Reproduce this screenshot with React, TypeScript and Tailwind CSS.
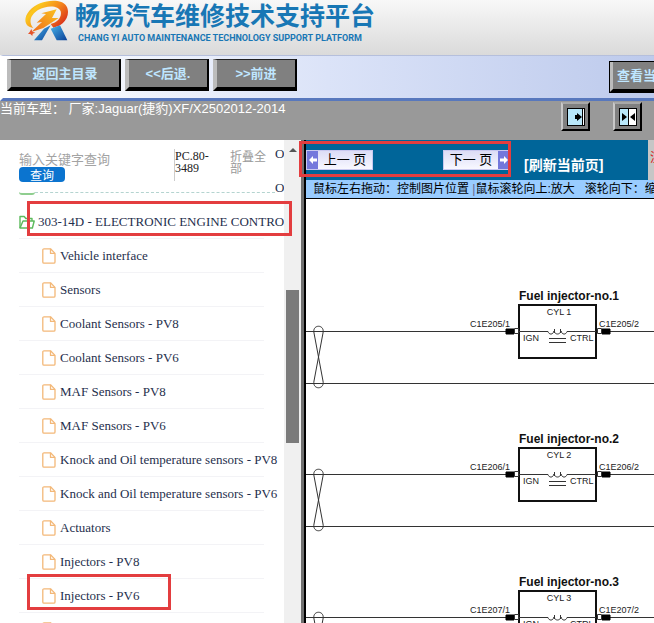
import React from "react";

const items = [
  "Vehicle interface",
  "Sensors",
  "Coolant Sensors - PV8",
  "Coolant Sensors - PV6",
  "MAF Sensors - PV8",
  "MAF Sensors - PV6",
  "Knock and Oil temperature sensors - PV8",
  "Knock and Oil temperature sensors - PV6",
  "Actuators",
  "Injectors - PV8",
  "Injectors - PV6",
];

const injectors = [
  { no: 1, code: "C1E205" },
  { no: 2, code: "C1E206" },
  { no: 3, code: "C1E207" },
];

function Logo() {
  return (
    <svg className="h-[42px] w-[48px] shrink-0" viewBox="0 0 144 126" aria-hidden="true">
      <defs>
        <linearGradient id="flame" x1="0" y1="0" x2="1" y2="0.6">
          <stop offset="0" stopColor="#ee7a1c" />
          <stop offset="0.3" stopColor="#fbc81e" />
          <stop offset="0.65" stopColor="#f58a1c" />
          <stop offset="1" stopColor="#dc3a1c" />
        </linearGradient>
        <linearGradient id="bolt" x1="0" y1="1" x2="1" y2="0">
          <stop offset="0" stopColor="#ee6a1c" />
          <stop offset="1" stopColor="#fbc31e" />
        </linearGradient>
        <linearGradient id="leg" x1="0" y1="0" x2="1" y2="1">
          <stop offset="0" stopColor="#49b4ea" />
          <stop offset="1" stopColor="#0a3f96" />
        </linearGradient>
      </defs>
      <path d="M28 84C2 82 -4 56 16 32C38 6 84 -4 112 6C138 16 138 50 116 70C108 77 100 80 88 83L80 72C102 66 114 50 110 34C104 16 70 14 42 30C20 44 12 66 28 84Z" fill="url(#flame)" />
      <path d="M52 40L98 28L84 54L104 54L58 84L22 96L54 66L38 68L66 42Z" fill="url(#bolt)" />
      <path d="M60 86L80 76L66 100L54 121L30 121Z" fill="url(#leg)" />
      <path d="M80 86L108 76L130 121L98 121Z" fill="url(#leg)" />
      <path d="M22 87L25 95L34 98L26 101L25 108L19 102L12 102L17 96Z" fill="#e5532a" />
    </svg>
  );
}

function FileIcon() {
  return (
    <svg className="h-4 w-[14px] shrink-0" viewBox="0 0 14 16" fill="none" stroke="#f3b878" strokeWidth="1.3" strokeLinejoin="round" aria-hidden="true">
      <path d="M2 .8h6.5L13 5.4V14a1.2 1.2 0 0 1-1.2 1.2H2A1.2 1.2 0 0 1 .8 14V2A1.2 1.2 0 0 1 2 .8Z" />
      <path d="M8.5.8v4.6H13" />
    </svg>
  );
}

function FolderIcon() {
  return (
    <svg className="h-[14px] w-4 shrink-0" viewBox="0 0 16 14" fill="none" stroke="#5cba5c" strokeWidth="1.4" strokeLinejoin="round" aria-hidden="true">
      <path d="M1 13V1.5h4.2l1.6 2H13V6" />
      <path d="M1 13 4 6h11.2l-1.8 7Z" />
    </svg>
  );
}

function ToolButton({ children, className = "" }: { children: React.ReactNode; className?: string }) {
  return (
    <button
      type="button"
      className={`h-8 shrink-0 overflow-hidden whitespace-nowrap border-t border-r-2 border-b-4 border-l-4 border-t-[#222] border-r-black border-b-black border-l-[#bcbcbc] bg-[#808080] text-[13px] leading-4 font-bold text-[#bfe6ff] ${className}`}
    >
      {children}
    </button>
  );
}

function IconButton({ label, split = false }: { label: string; split?: boolean }) {
  return (
    <button
      type="button"
      aria-label={label}
      className="flex h-[29px] w-[29px] shrink-0 items-center justify-center border-2 border-t-[#a8a8a8] border-r-black border-b-black border-l-[#c8c8c8] bg-[#808080]"
    >
      <svg className="h-[18px] w-[18px]" viewBox="0 0 18 18" aria-hidden="true">
        <rect x=".5" y=".5" width="17" height="17" fill="#fff" stroke="#000" />
        <rect x="1" y="1" width={split ? 8 : 14} height="16" fill="#b9e8fb" />
        <path d={split ? "M9.5 0v18" : "M15.5 0v18"} stroke="#000" />
        {split ? (
          <path d="M3 5v8l5-4ZM16 5v8l-5-4Z" />
        ) : (
          <path d="M8 7h2V5l5 4-5 4v-2H8Z" />
        )}
      </svg>
    </button>
  );
}

function PageArrow({ back = false }: { back?: boolean }) {
  return (
    <span className="flex h-full w-[11px] shrink-0 items-center justify-center bg-[#7478dc]">
      <svg className="h-2 w-2" viewBox="0 0 8 8" fill="#fff" aria-hidden="true">
        <path d={back ? "M0 4 4 0v2.500h4v3H4V8Z" : "M8 4 4 0v2.500H0v3h4V8Z"} />
      </svg>
    </span>
  );
}

function Wiring() {
  return (
    <svg className="block h-full w-full font-['Liberation_Sans',sans-serif]" role="img" aria-label="Fuel injector wiring">
      <g transform="translate(-306 -199)">
        {injectors.map(({ no, code }, i) => (
          <g key={no} transform={`translate(0 ${i * 143})`} fill="none" stroke="#333">
            <path d="M306 331.500H508M610 331.500H3000M306 383.500H3000" />
            <path d="M314 333C312 324 325 324 323 333L314 381C312 390 325 390 323 381Z" />
            <rect x="519" y="305" width="77" height="53" stroke="#111" strokeWidth="2" />
            <path d="M519 331.500H548C549 335 553 335 554 331C555 335 560 335 561 331C562 335 566 335 567 331.500H596M554.500 329v4M560.500 329v4" />
            <path d="M549 338.500h17M549 342.500h17" />
            <path d="M506 329h8v5h-8ZM602 329h8v5h-8Z" fill="#000" stroke="#000" />
            <path d="M514.500 328.500h4v5h-4ZM597.500 328.500h4v5h-4Z" fill="#fff" />
            <g fill="#222" stroke="none" fontSize="9">
              <text x="519" y="300" fontSize="12" fontWeight="700" fill="#111">Fuel injector-no.{no}</text>
              <text x="559" y="315" textAnchor="middle">CYL {no}</text>
              <text x="510" y="327" textAnchor="end">{code}/1</text>
              <text x="599" y="327">{code}/2</text>
              <text x="523" y="341">IGN</text>
              <text x="570" y="341">CTRL</text>
            </g>
          </g>
        ))}
      </g>
    </svg>
  );
}

export default function App() {
  return (
    <div className="relative flex h-screen flex-col overflow-hidden bg-white font-['Liberation_Sans','Noto_Sans_CJK_SC',sans-serif]">
      <header className="flex h-[55px] shrink-0 items-start bg-linear-to-b from-[#f8f8f8] to-[#dadada] pl-6">
        <Logo />
        <div className="pl-[3px] whitespace-nowrap text-[#1877b5]">
          <h1 className="pt-[2px] text-[25px] leading-7 font-bold">畅易汽车维修技术支持平台</h1>
          <p className="pl-[3px] font-['Roboto',sans-serif] text-[9px] leading-4 font-bold">CHANG YI AUTO MAINTENANCE TECHNOLOGY SUPPORT PLATFORM</p>
        </div>
      </header>

      <nav className="flex h-[46px] shrink-0 items-start gap-1 overflow-hidden border-t border-b-3 border-l-3 border-t-[#b5bfdc] border-b-[#5878bd] border-l-white bg-linear-to-r from-white via-[#dbe3f8] to-[#bdcaec] pt-[3px] pl-1">
        <ToolButton className="w-[114px]">返回主目录</ToolButton>
        <ToolButton className="w-[84px]">&lt;&lt;后退.</ToolButton>
        <ToolButton className="w-[84px]">&gt;&gt;前进</ToolButton>
        <div className="ml-auto w-[45px] shrink-0 overflow-hidden pt-[2px]">
          <ToolButton className="w-[114px] pl-1 text-left outline outline-1 -outline-offset-1 outline-black">查看当</ToolButton>
        </div>
      </nav>

      <div className="flex h-[39px] shrink-0 items-start justify-between bg-[#999] pr-3">
        <p className="text-[13px] leading-[15px] whitespace-pre text-white">当前车型： 厂家:Jaguar(捷豹)XF/X2502012-2014</p>
        <div className="flex gap-[23px] pt-px">
          <IconButton label="展开" />
          <IconButton label="分栏" split />
        </div>
      </div>

      <div className="flex min-h-0 flex-1">
        <aside className="flex w-[306px] shrink-0 border-r-2 border-black">
          <div className="flex min-w-0 flex-1 flex-col overflow-hidden pl-[19px] font-['Liberation_Serif','Noto_Sans_CJK_SC',serif] text-[13px] text-[#1f2f4d]">
            <div className="flex h-[65px] shrink-0">
              <div className="flex min-w-0 flex-1 flex-col">
                <form className="flex h-[52px] pt-[9px]" onSubmit={(e) => e.preventDefault()}>
                  <div className="flex w-[155px] flex-col items-start pt-[2px]">
                    <input
                      type="text"
                      aria-label="关键字"
                      placeholder="输入关键字查询"
                      className="h-4 w-full bg-transparent font-['Noto_Sans_CJK_SC',sans-serif] text-[13px] leading-4 outline-none placeholder:text-[#a3a3a3]"
                    />
                    <button type="submit" className="h-[15px] w-[46px] rounded-sm bg-[#0b74cf] font-['Noto_Sans_CJK_SC',sans-serif] text-[12px] leading-[15px] text-white">
                      查询
                    </button>
                  </div>
                  <p className="h-8 w-14 border-l border-[#ccc] pt-px text-[12px] leading-3 text-[#222]">PC.80-<br />3489</p>
                  <button type="button" className="h-6 w-10 pt-px text-left font-['Noto_Sans_CJK_SC',sans-serif] text-[12px] leading-3 text-[#999]">
                    折叠全部
                  </button>
                </form>
                <div className="flex">
                  <span className="h-[3px] w-4 rounded-b-sm border-b-2 border-[#8fce8f]" />
                  <span className="flex-1 border-t border-dashed border-[#b4d4d0]" />
                </div>
              </div>
              <div className="w-[9px] overflow-hidden leading-[34px]">
                <div className="-mt-[3px]">O</div>
                <div>O</div>
              </div>
            </div>
            <ul className="w-[245px] whitespace-nowrap">
              <li className="flex h-[34px] items-center gap-[3px] border-b border-[#f3f3f6]">
                <FolderIcon />
                <a href="#engine">303-14D - ELECTRONIC ENGINE CONTROL</a>
              </li>
              {items.map((item) => (
                <li key={item} className="flex h-[34px] items-center gap-1 border-b border-[#f3f3f6] pl-[23px]">
                  <FileIcon />
                  <a href="#item">{item}</a>
                </li>
              ))}
              <li className="flex h-[34px] items-center pl-[23px]">
                <FileIcon />
              </li>
            </ul>
          </div>
          <div className="flex w-[17px] shrink-0 flex-col items-center bg-[#f0f0f0] pt-2" aria-hidden="true">
            <span className="h-0 w-0 border-x-4 border-b-4 border-x-transparent border-b-[#555]" />
            <span className="mt-[138px] h-[153px] w-[13px] bg-[#7b7b7b]" />
          </div>
          <div className="w-[3px] shrink-0 bg-[#707070]" />
        </aside>

        <main className="flex min-w-0 flex-1 flex-col">
          <div className="flex h-10 shrink-0 bg-[#c6c6c6]">
            <div className="flex min-w-0 flex-1 items-start bg-[#006599] pt-[10px]">
              <button type="button" className="flex h-5 w-[67px] items-center border border-[#c8c8f0] bg-linear-to-b from-[#dcdcf6] to-[#f8f8ff] text-[13px] leading-4 font-normal text-black">
                <PageArrow back />
                <span className="flex-1 text-center">上一 页</span>
              </button>
              <button type="button" className="ml-[70px] flex h-5 w-[67px] items-center border border-[#c8c8f0] bg-linear-to-b from-[#dcdcf6] to-[#f8f8ff] text-[13px] leading-4 font-normal text-black">
                <span className="flex-1 text-center">下一 页</span>
                <PageArrow />
              </button>
              <a href="#refresh" className="pt-[5px] pl-[14px] text-[14px] leading-5 font-bold whitespace-nowrap text-white">[刷新当前页]</a>
            </div>
            <p className="w-[6px] overflow-hidden pt-[10px] pl-[2px] text-[12px] leading-4 whitespace-nowrap text-[#d22]">注</p>
          </div>
          <p className="h-[19px] shrink-0 overflow-hidden border-b border-black bg-[#99ccff] pl-[7px] text-[12px] leading-[18px] whitespace-pre text-black">
            鼠标左右拖动：控制图片位置 <span className="text-[#668]">|</span>鼠标滚轮向上:放大   滚轮向下：缩
          </p>
          <div className="min-h-0 flex-1">
            <Wiring />
          </div>
        </main>
      </div>

      <div className="pointer-events-none absolute top-[201px] left-[27px] h-[35px] w-[265px] border-3 border-[#e33d3f]" />
      <div className="pointer-events-none absolute top-[574px] left-[27px] h-9 w-36 border-3 border-[#e33d3f]" />
      <div className="pointer-events-none absolute top-[141px] left-[299px] h-9 w-[212px] border-3 border-[#e33d3f]" />
    </div>
  );
}
